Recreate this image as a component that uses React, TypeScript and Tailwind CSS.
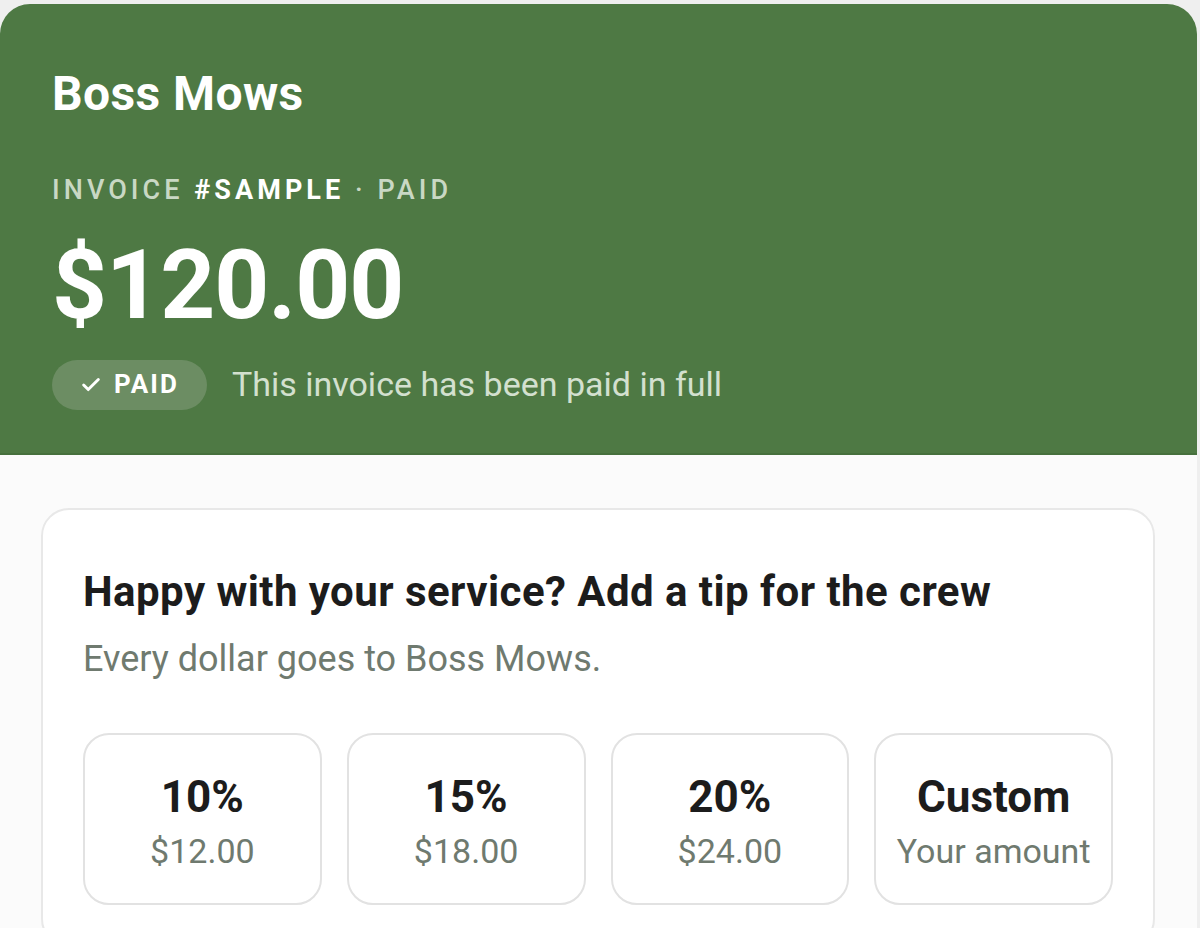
import { Check } from "lucide-react";

const tips = [
  { label: "10%", amount: "$12.00" },
  { label: "15%", amount: "$18.00" },
  { label: "20%", amount: "$24.00" },
  { label: "Custom", amount: "Your amount" },
];

export default function App() {
  return (
    <div
      className="min-h-[928px] bg-[#efefef] pt-[4px] pr-[3px]"
      style={{ fontFamily: "Roboto, 'Noto Sans', sans-serif" }}
    >
      <div className="min-h-[924px] rounded-t-[30px] bg-[#fbfbfb] overflow-hidden">
        {/* Header */}
        <div className="bg-[#4e7944] border-b-2 border-[#46703d] px-[52px] pt-[62px] h-[451px]">
          <h1 className="text-[48px] leading-[56px] font-bold text-white tracking-[0.4px]">
            Boss Mows
          </h1>

          <div className="mt-[53px] text-[27px] leading-[30px] tracking-[0.15em] font-medium text-[#c9d8c4]">
            INVOICE <span className="font-bold text-white">#SAMPLE</span> · PAID
          </div>

          <div className="mt-[30px] text-[96px] leading-[100px] font-bold text-white tracking-[-1px]">
            $120.00
          </div>

          <div className="mt-[24px] flex items-center gap-[25px]">
            <span className="flex items-center gap-[12px] h-[50px] px-[28px] rounded-full bg-[#6c8d63] text-white text-[26px] font-bold tracking-[0.08em]">
              <Check className="w-[22px] h-[22px]" strokeWidth={3.2} />
              PAID
            </span>
            <span className="text-[34px] text-[#d3e0cf]">This invoice has been paid in full</span>
          </div>
        </div>

        {/* Tip card */}
        <div className="px-[41px] pt-[53px]">
          <div className="mr-[1px] rounded-[28px] border-2 border-[#e8e8e8] bg-white px-[40px] pt-[58px] pb-[40px]">
            <h2 className="text-[42px] leading-[48px] font-bold text-[#1c1c1c] tracking-[0.45px]">
              Happy with your service? Add a tip for the crew
            </h2>
            <p className="mt-[21px] text-[36px] leading-[44px] text-[#6f7a6f]">
              Every dollar goes to Boss Mows.
            </p>

            <div className="mt-[52px] grid grid-cols-4 gap-[25px]">
              {tips.map((t) => (
                <button
                  key={t.label}
                  className="h-[172px] pt-[8px] rounded-[26px] border-2 border-[#e2e2e2] bg-white flex flex-col items-center justify-center"
                >
                  <span className="text-[44px] leading-[48px] font-bold text-[#1c1c1c]">{t.label}</span>
                  <span className="mt-[8px] text-[34px] leading-[44px] text-[#6f7a6f]">{t.amount}</span>
                </button>
              ))}
            </div>
          </div>
        </div>
      </div>
    </div>
  );
}
